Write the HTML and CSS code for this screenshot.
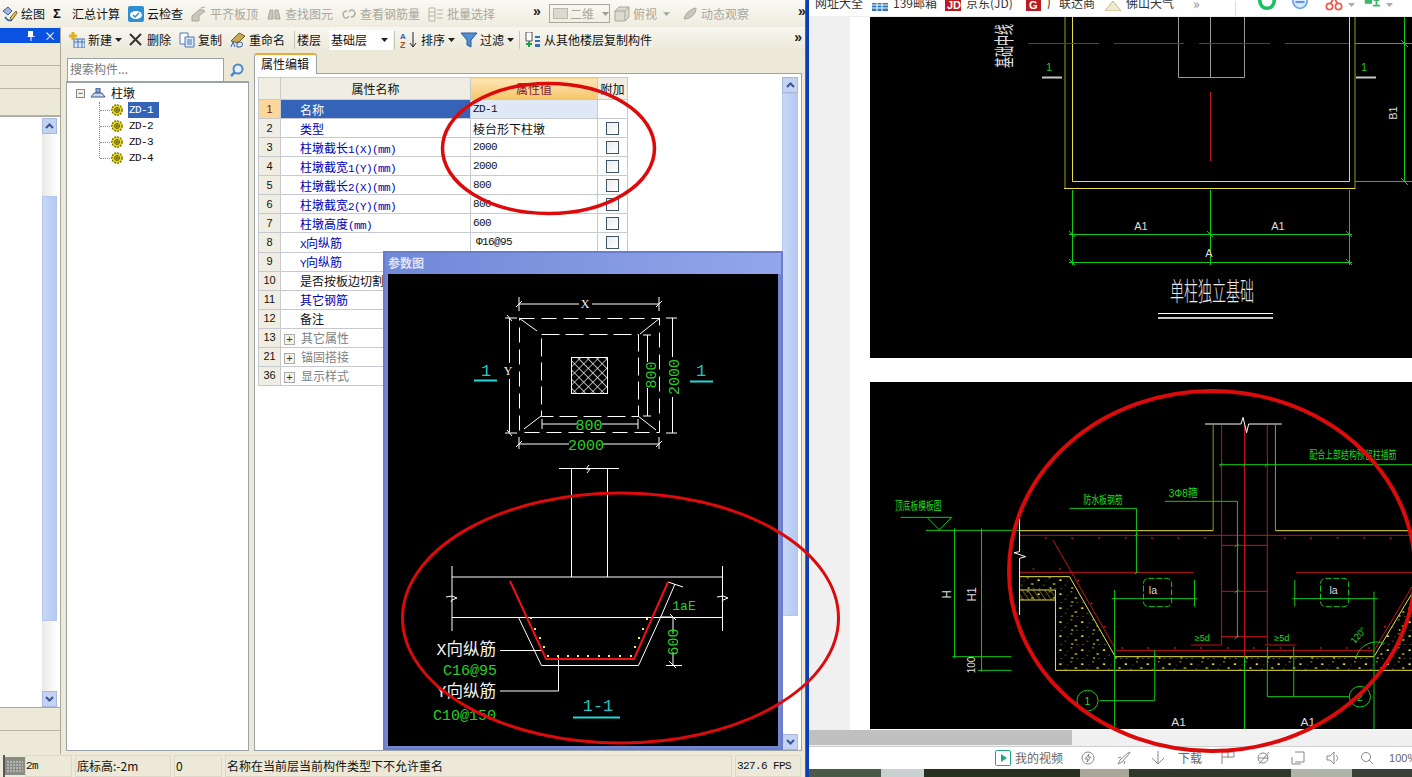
FILE: index.html
```html
<!DOCTYPE html>
<html lang="zh-CN">
<head>
<meta charset="utf-8">
<title>钢筋算量</title>
<link rel="stylesheet" href="styles.css">
</head>
<body>
<svg class="defs" width="0" height="0" aria-hidden="true">
  <defs>
    <symbol id="gear" viewBox="0 0 12 12">
      <circle cx="6" cy="6" r="5.200" fill="#e8dc10" stroke="#6a6000" stroke-width="1.200" stroke-dasharray="2 1"/>
      <circle cx="6" cy="6" r="2.400" fill="#f8f4a0" stroke="#5a5200"/>
      <path d="M6 3.500v5M3.500 6h5" stroke="#5a5200"/>
    </symbol>
    <symbol id="caret" viewBox="0 0 7 4"><path d="M0 0h7L3.500 4z" fill="#222"/></symbol>
    <symbol id="chev-up" viewBox="0 0 9 6"><path d="M1 5l3.500-3.500L8 5" fill="none" stroke="#3a5590" stroke-width="2"/></symbol>
    <symbol id="chev-down" viewBox="0 0 9 6"><path d="M1 1l3.500 3.500L8 1" fill="none" stroke="#3a5590" stroke-width="2"/></symbol>
    <pattern id="hatch" width="6.500" height="6.500" patternUnits="userSpaceOnUse" patternTransform="rotate(45)">
      <path d="M0 0H6.500M0 0V6.500" stroke="#fff" stroke-width="1.200" fill="none"/>
    </pattern>
    <pattern id="concrete" width="62" height="42" patternUnits="userSpaceOnUse">
      <rect x="8" y="10" width="6" height="5" fill="#f0e830"/>
      <rect x="40" y="4" width="4" height="3" fill="#f0e830"/>
      <rect x="52" y="22" width="6" height="4" fill="#f0e830"/>
      <rect x="24" y="26" width="3" height="3" fill="#b0a820"/>
      <rect x="42" y="34" width="5" height="4" fill="#f0e830"/>
      <rect x="12" y="36" width="3" height="2" fill="#c8c8a0"/>
      <rect x="30" y="14" width="2" height="2" fill="#c8c8a0"/>
      <rect x="58" y="36" width="2" height="3" fill="#c8c8a0"/>
    </pattern>
    <pattern id="slant" width="16" height="30" patternUnits="userSpaceOnUse">
      <path d="M-4 0L16 30M12 0L32 30" stroke="#b8a820" stroke-width="2" fill="none"/>
    </pattern>
  </defs>
</svg>

<div class="screen">
  <section class="app">
    <div class="bar-top">
      <span class="tool"><svg class="ico" viewBox="0 0 16 16"><path d="M1 5l5-4 4 4-4 4z" fill="#9fb6dc" stroke="#44609a"/><path d="M8 12l6-7 1 2-5 7z" fill="#e8c060" stroke="#7a6020"/><path d="M3 11c2 3 5 4 7 3" stroke="#3060b0" stroke-width="1.500" fill="none"/></svg>绘图</span>
      <span class="tool"><span class="sigma">Σ</span><span class="sigma-text">汇总计算</span></span>
      <span class="tool"><svg class="ico" viewBox="0 0 16 16"><rect width="16" height="16" rx="2" fill="#2f8fd0"/><ellipse cx="8" cy="9" rx="6" ry="4" fill="#fff"/><path d="M5 9l2 2 4-4" stroke="#2f8fd0" stroke-width="1.500" fill="none"/></svg>云检查</span>
      <span class="tool off"><svg class="ico" viewBox="0 0 16 16"><path d="M1 15V10l8-7 5 2-6 5v5z" fill="#c9c7bb" stroke="#aaa89c"/><path d="M10 2l4-1" stroke="#aaa89c"/></svg>平齐板顶</span>
      <span class="tool off"><svg class="ico" viewBox="0 0 16 16"><path d="M2 13l2-9h3v9zM9 13V4h3l2 9z" fill="#c9c7bb" stroke="#aaa89c"/></svg>查找图元</span>
      <span class="tool off"><svg class="ico" viewBox="0 0 16 16"><path d="M6 5C2 5 1 9 3 11s4 1 5-1M10 11c4 0 5-4 3-6s-4-1-5 1" stroke="#b0aea0" fill="none" stroke-width="1.500"/></svg>查看钢筋量</span>
      <span class="tool off"><svg class="ico" viewBox="0 0 16 16"><path d="M1 2h6v13H1zM1 6h6M1 10h6M9 4h6M9 8h6M9 12h6" fill="none" stroke="#b5b3a6"/></svg>批量选择</span>
      <span class="more more-a">»</span>
      <span class="combo-2d"><i class="swatch"></i>二维<svg class="caret" viewBox="0 0 7 4"><use href="#caret"/></svg></span>
      <span class="tool off view"><svg class="ico" viewBox="0 0 16 16"><path d="M1 5l4-4h10v10l-4 4H1zM1 5h10v10M11 5l4-4" fill="#dcdacd" stroke="#aaa89c"/></svg>俯视<svg class="caret grey" viewBox="0 0 7 4"><use href="#caret"/></svg></span>
      <span class="tool off orbit"><svg class="ico" viewBox="0 0 16 16"><path d="M2 13C3 8 8 3 14 2c0 6-5 11-12 11z" fill="#c9c7bb" stroke="#aaa89c"/></svg>动态观察</span>
      <span class="more more-b">»</span>
    </div>

    <div class="main">
      <aside class="dock">
        <div class="dock-title">
          <svg class="pin" viewBox="0 0 9 10"><path d="M2 0h5v5h1.500v1h-3v4h-1V6h-3V5H2z" fill="#fff"/></svg>
          <span class="close">×</span>
        </div>
        <div class="dock-row"></div>
        <div class="dock-row"></div>
        <div class="dock-row dock-row-tall"></div>
        <div class="dock-list">
          <div class="dock-blank"></div>
          <div class="scroll scroll-dock">
            <span class="sbtn"><svg class="chev"><use href="#chev-up"/></svg></span>
            <span class="strack"><i class="sthumb"></i></span>
            <span class="sbtn"><svg class="chev"><use href="#chev-down"/></svg></span>
          </div>
        </div>
        <div class="dock-row"></div>
        <div class="dock-row"></div>
      </aside>

      <div class="work">
        <div class="bar-second">
          <span class="tool"><svg class="ico" viewBox="0 0 16 16"><rect x="5" y="7" width="11" height="9" fill="#dbe7f7" stroke="#4a76b8"/><path d="M5 10h11M9 7v9M13 7v9" stroke="#4a76b8"/><path d="M4 0v8M0 4h8" stroke="#e0b020" stroke-width="3"/></svg>新建<svg class="caret" viewBox="0 0 7 4"><use href="#caret"/></svg></span>
          <span class="tool tool-del"><svg class="ico ico-x" viewBox="0 0 13 13"><path d="M1 1l11 11M12 1L1 12" stroke="#333" stroke-width="2"/></svg>删除</span>
          <span class="tool"><svg class="ico" viewBox="0 0 16 16"><path d="M1 1h8v11H1z" fill="#fff" stroke="#4a76b8"/><path d="M6 5h9v10H6z" fill="#dbe7f7" stroke="#4a76b8"/><path d="M8 8h5M8 10h5M8 12h5" stroke="#4a76b8"/></svg>复制</span>
          <span class="tool"><svg class="ico" viewBox="0 0 16 16"><path d="M1 9L9 1l6 3-7 7z" fill="#c8a850" stroke="#77602a"/><path d="M1 15l2-5 2 5M7 15v-5h3a1 1 0 0 1 0 5z" stroke="#3060b0" fill="none"/></svg>重命名</span>
          <i class="sep sep-floor"></i>
          <span class="label">楼层</span>
          <span class="combo-floor">基础层<svg class="caret" viewBox="0 0 7 4"><use href="#caret"/></svg></span>
          <i class="sep"></i>
          <span class="tool tool-sort"><svg class="ico ico-az" viewBox="0 0 17 18"><text class="az-a" x="0" y="8">A</text><text class="az-z" x="0" y="17">Z</text><path d="M13 1v15M10 12l3 4 3-4" stroke="#222" fill="none"/></svg>排序<svg class="caret" viewBox="0 0 7 4"><use href="#caret"/></svg></span>
          <span class="tool tool-filter"><svg class="ico" viewBox="0 0 16 16"><path d="M0 1h16l-6 7v7l-4-2V8z" fill="#4f90d8" stroke="#2a5c9c"/></svg>过滤<svg class="caret" viewBox="0 0 7 4"><use href="#caret"/></svg></span>
          <i class="sep sep-copy"></i>
          <span class="tool tool-copy"><svg class="ico" viewBox="0 0 16 16"><path d="M1 0h6v9H1z" fill="#fff" stroke="#555"/><path d="M1 12h6M4 9v6" stroke="#20a040" stroke-width="2"/><path d="M10 4h5v2h-5zM10 8h5v2h-5zM10 12h5v3h-5z" fill="#3070b8"/></svg>从其他楼层复制构件</span>
          <span class="more more-c">»</span>
        </div>

        <div class="panes">
          <div class="tree-pane">
            <div class="search"><span class="search-box">搜索构件...</span>
              <svg class="search-ico" viewBox="0 0 14 14"><circle cx="8" cy="6" r="4.500" fill="#e6f0fa" stroke="#4a8cc8" stroke-width="2"/><path d="M5 9l-4 4" stroke="#4a8cc8" stroke-width="2.500"/></svg>
            </div>
            <div class="tree">
              <div class="tree-root"><span class="tbox">−</span>
                <svg class="tree-ico" viewBox="0 0 16 10"><path d="M6 0h4v5H6z" fill="#8aa4d0" stroke="#3a5a90"/><path d="M1 9l3-4h8l3 4z" fill="#c8d4e8" stroke="#3a5a90"/></svg>柱墩</div>
              <ul class="tree-list">
                <li class="tree-item"><svg class="gear"><use href="#gear"/></svg><span class="sel">ZD-1</span></li>
                <li class="tree-item"><svg class="gear"><use href="#gear"/></svg><span>ZD-2</span></li>
                <li class="tree-item"><svg class="gear"><use href="#gear"/></svg><span>ZD-3</span></li>
                <li class="tree-item"><svg class="gear"><use href="#gear"/></svg><span>ZD-4</span></li>
              </ul>
            </div>
          </div>

          <div class="prop-pane">
            <div class="tabs"><span class="tab">属性编辑</span></div>
            <div class="prop-body">
              <table class="grid">
                <colgroup><col class="c-n"><col class="c-name"><col class="c-val"><col class="c-add"></colgroup>
                <thead><tr><th class="num"></th><th>属性名称</th><th class="th-val">属性值</th><th>附加</th></tr></thead>
                <tbody>
                  <tr class="current"><td class="num">1</td><td class="name">名称</td><td class="val">ZD-1</td><td></td></tr>
                  <tr><td class="num">2</td><td class="name link">类型</td><td class="val val-cn">棱台形下柱墩</td><td><i class="check"></i></td></tr>
                  <tr><td class="num">3</td><td class="name link">柱墩截长<span class="lat">1(X)(mm)</span></td><td class="val">2000</td><td><i class="check"></i></td></tr>
                  <tr><td class="num">4</td><td class="name link">柱墩截宽<span class="lat">1(Y)(mm)</span></td><td class="val">2000</td><td><i class="check"></i></td></tr>
                  <tr><td class="num">5</td><td class="name link">柱墩截长<span class="lat">2(X)(mm)</span></td><td class="val">800</td><td><i class="check"></i></td></tr>
                  <tr><td class="num">6</td><td class="name link">柱墩截宽<span class="lat">2(Y)(mm)</span></td><td class="val">800</td><td><i class="check"></i></td></tr>
                  <tr><td class="num">7</td><td class="name link">柱墩高度<span class="lat">(mm)</span></td><td class="val">600</td><td><i class="check"></i></td></tr>
                  <tr><td class="num">8</td><td class="name link"><span class="lat">X</span>向纵筋</td><td class="val val-steel">Φ16@95</td><td><i class="check"></i></td></tr>
                  <tr><td class="num">9</td><td class="name link"><span class="lat">Y</span>向纵筋</td><td class="val"></td><td></td></tr>
                  <tr><td class="num">10</td><td class="name">是否按板边切割</td><td class="val"></td><td></td></tr>
                  <tr><td class="num">11</td><td class="name link">其它钢筋</td><td class="val"></td><td></td></tr>
                  <tr><td class="num">12</td><td class="name">备注</td><td class="val"></td><td></td></tr>
                  <tr class="group"><td class="num">13</td><td class="name" colspan="3"><span class="plus">+</span>其它属性</td></tr>
                  <tr class="group"><td class="num">21</td><td class="name" colspan="3"><span class="plus">+</span>锚固搭接</td></tr>
                  <tr class="group"><td class="num">36</td><td class="name" colspan="3"><span class="plus">+</span>显示样式</td></tr>
                </tbody>
              </table>
              <div class="scroll scroll-prop">
                <span class="sbtn"><svg class="chev"><use href="#chev-up"/></svg></span>
                <span class="strack"><i class="sthumb"></i></span>
                <span class="sbtn"><svg class="chev"><use href="#chev-down"/></svg></span>
              </div>
            </div>
          </div>
        </div>
      </div>
    </div>

    <div class="status">
      <span class="st-key"><svg viewBox="0 0 20 18" width="20" height="18"><rect width="20" height="18" fill="#8b8b85"/><path d="M2 5h16M2 8h16M2 11h16M2 14h16" stroke="#ddd" stroke-dasharray="2 1"/></svg></span>
      <span class="st st-a">2m</span>
      <span class="st st-b">底标高:-2m</span>
      <span class="st st-c">0</span>
      <span class="st st-d">名称在当前层当前构件类型下不允许重名</span>
      <span class="st st-e">327.6 FPS</span>
    </div>

    <div class="dialog">
      <div class="dialog-title">参数图</div>
      <svg class="cad" viewBox="388 274 390 472" width="390" height="472">
        <g class="w">
          <path d="M519 304H579M592 304H659M519 297V311M659 297V311M516 307l6-6M656 307l6-6"/>
          <rect class="dash-l" x="519.500" y="318.500" width="140" height="114"/>
          <rect class="dash-m" x="541.500" y="334.500" width="97" height="82"/>
          <path d="M519 318l18 13M660 318l-20 16M524 429l17-13M638 416l18 14"/>
          <rect class="hatch" x="571.500" y="357.500" width="36" height="36"/>
          <path d="M509.500 318V363M509.500 379V432M505 318h12M505 433h12M507 315l5 6M507 430l5 6"/>
          <path d="M647.500 335V362M647.500 388V416M643 335h8M643 416h8M672.500 318V357M672.500 397V433M666 318h11M666 433h11"/>
          <path d="M542 424H577M602 424H638M542 419v10M638 419v10M519 444H569M603 444H659M519 437v12M659 437v12M516 447l6-6M656 447l6-6"/>
          <path d="M559 468.500H619M571.500 468V577M607.500 468V577M589 465l-3 4 4 0-3 4"/>
          <path d="M452 566V631M722.500 566V631M452 577H722.500M452 617.500H722.500M446 597l6-1 5 2-5 2-1 2M717 597l6-1 5 2-5 2-1 2"/>
          <path d="M518.500 617.500L541.500 665.500H638.500L660.500 617.500L675 584"/>
          <path d="M668 582l15 5M660 617h12M673 617V632M673 652V665M666 665.500h16M669 661l7 7M670 614l6 6"/>
          <path d="M500 650.500H543M500 691H558.500V655"/>
        </g>
        <path class="r2" d="M510 581L546 659H634L668 582"/>
        <g class="ydots">
          <rect x="530" y="617" width="2" height="2"/><rect x="534" y="628" width="2" height="2"/><rect x="539" y="637" width="2" height="2"/><rect x="543" y="646" width="2" height="2"/><rect x="547" y="655" width="2" height="2"/><rect x="557" y="655" width="2" height="2"/><rect x="567" y="655" width="2" height="2"/><rect x="577" y="655" width="2" height="2"/><rect x="587" y="655" width="2" height="2"/><rect x="598" y="655" width="2" height="2"/><rect x="608" y="655" width="2" height="2"/><rect x="619" y="655" width="2" height="2"/><rect x="630" y="655" width="2" height="2"/><rect x="634" y="646" width="2" height="2"/><rect x="638" y="637" width="2" height="2"/><rect x="642" y="628" width="2" height="2"/><rect x="646" y="618" width="2" height="2"/>
        </g>
        <g class="cyan-line"><path d="M474 380.500H497M690 381.500H713M573 717.500H620"/></g>
        <text class="t t-w t-dim" x="585" y="308" text-anchor="middle">X</text>
        <text class="t t-w t-dim" x="508" y="375" text-anchor="middle">Y</text>
        <text class="t t-c t-lg" x="486" y="376" text-anchor="middle">1</text>
        <text class="t t-c t-lg" x="701" y="376" text-anchor="middle">1</text>
        <text class="t t-g" x="589" y="430" text-anchor="middle">800</text>
        <text class="t t-g" x="586" y="450" text-anchor="middle">2000</text>
        <text class="t t-g" transform="rotate(-90 656 375)" x="656" y="375" text-anchor="middle">800</text>
        <text class="t t-g" transform="rotate(-90 679 377)" x="679" y="377" text-anchor="middle">2000</text>
        <text class="t t-g t-sm" x="684" y="610" text-anchor="middle">1aE</text>
        <text class="t t-g t-six" transform="rotate(-90 678 642)" x="678" y="642" text-anchor="middle">600</text>
        <text class="t t-w t-cn" x="496" y="655" text-anchor="end">X向纵筋</text>
        <text class="t t-g" x="497" y="675" text-anchor="end">C16@95</text>
        <text class="t t-w t-cn" x="496" y="697" text-anchor="end">Y向纵筋</text>
        <text class="t t-g" x="496" y="720" text-anchor="end">C10@150</text>
        <text class="t t-c t-lg" x="598" y="711" text-anchor="middle">1-1</text>
      </svg>
    </div>
  </section>

  <i class="app-edge"></i>

  <section class="browser">
    <div class="bookmarks">
      <span class="bm bm-a">网址大全</span>
      <span class="bm bm-b"><svg class="bm-ico" viewBox="0 0 16 16"><rect y="8" width="16" height="8" fill="#2a78c0"/><path d="M0 10h16M0 13h16M5 8v8M10 8v8" stroke="#fff"/></svg>139邮箱</span>
      <span class="bm bm-c"><svg class="bm-ico" viewBox="0 0 16 16"><rect width="16" height="16" fill="#b81c22"/><text class="bm-jd" x="2" y="14">JD</text></svg>京东(JD)</span>
      <span class="bm bm-d"><svg class="bm-ico" viewBox="0 0 16 16"><rect width="15" height="16" fill="#b81c22"/><text class="bm-jd" x="3" y="14">G</text></svg>广联达商</span>
      <span class="bm bm-e"><svg class="bm-ico" viewBox="0 0 16 16"><path d="M0 16L8 6l8 10z" fill="#f0ead0" stroke="#c8b880"/></svg>佛山天气</span>
      <span class="bm bm-more">»</span>
      <i class="bm-sep"></i>
      <svg class="bm-tool t1" viewBox="0 0 20 20"><circle cx="10" cy="9" r="8" fill="#fff" stroke="#18c060" stroke-width="4"/></svg>
      <svg class="bm-tool t2" viewBox="0 0 20 20"><circle cx="10" cy="9" r="8" fill="#d8e8fa" stroke="#70a8e8" stroke-width="2"/><path d="M5 10h10" stroke="#5090d8" stroke-width="2"/></svg>
      <svg class="bm-tool t3" viewBox="0 0 20 20"><circle cx="5" cy="15" r="3.500" fill="none" stroke="#e86050" stroke-width="2"/><circle cx="15" cy="15" r="3.500" fill="none" stroke="#e86050" stroke-width="2"/><path d="M6 12l7-12M14 12L7 0" stroke="#e86050" stroke-width="2"/></svg>
      <svg class="bm-caret" viewBox="0 0 7 4"><path d="M0 0h7L3.500 4z" fill="#aaa"/></svg>
      <svg class="bm-tool t4" viewBox="0 0 20 20"><path d="M2 2h8v10H2z" fill="#38b868"/><path d="M12 8h6M15 5v9M11 14h8" stroke="#38b868" stroke-width="2"/></svg>
      <svg class="bm-caret" viewBox="0 0 7 4"><path d="M0 0h7L3.500 4z" fill="#aaa"/></svg>
    </div>

    <div class="page">
      <div class="gutter"></div>
      <div class="gutter-white"></div>
      <div class="sheets">
        <svg class="sheet sheet-top" viewBox="870 17 542 341" width="542" height="341">
          <g class="olive"><path d="M1065 17V188M1355 17V188"/></g>
          <g class="yel"><path d="M1064 188.500H1355.500M1072.500 17V181.500H1349.500V17"/></g>
          <g class="grey"><path d="M1178.500 17V77.500H1244.500V17M1210.500 17V77"/></g>
          <path class="red" d="M1028 43.500H1099M1114 43.500H1184M1199 43.500H1270M1285 43.500H1349M1210.500 92V161"/>
          <g class="grn">
            <path d="M1355 43.500H1412M1404.500 17V181M1355 181.500H1412M1401 178l7 7M1401 40l7 7"/>
            <path d="M1072.500 190V265M1210.500 190V265M1349.500 190V265M1069 234.500H1352M1069 262.500H1352M1069 231l6 6M1207 231l6 6M1346 231l6 6M1069 259l6 6M1346 259l6 6"/>
          </g>
          <path class="lgrey" d="M1042 77.500H1062M1356 77.500H1376"/>
          <text class="s s-g" x="1049" y="71" text-anchor="middle">1</text>
          <text class="s s-g" x="1364" y="71" text-anchor="middle">1</text>
          <text class="s s-w s-col" transform="translate(1012 46) rotate(-90) scale(.55 1)" x="0" y="0" text-anchor="middle">基础中线</text>
          <text class="s s-w" transform="rotate(-90 1397 113)" x="1397" y="113" text-anchor="middle">B1</text>
          <text class="s s-w" x="1141" y="230" text-anchor="middle">A1</text>
          <text class="s s-w" x="1278" y="230" text-anchor="middle">A1</text>
          <text class="s s-w" x="1209" y="257" text-anchor="middle">A</text>
          <text class="s s-w s-title" transform="translate(1212 301) scale(.54 1)" x="0" y="0" text-anchor="middle">单柱独立基础</text>
          <path class="w" d="M1158 313.500H1273"/>
          <path class="lgrey" d="M1158 318H1273"/>
        </svg>

        <svg class="sheet sheet-bottom" viewBox="28 6 1540 1041" preserveAspectRatio="none" width="542" height="347">
          <path d="M453 590H595L725 830H1460L1568 640V871H555V660H453Z" fill="url(#concrete)"/>
          <rect x="453" y="630" width="102" height="30" fill="url(#slant)"/>
          <g class="yel ns">
            <path d="M453 452H1003M1180 452H1568M453 590H595L725 830H1460L1568 640M555 871H1568M555 630V871M453 630H555M453 660H555"/>
          </g>
          <g class="olive ns"><path d="M1003 135V452M1180 135V452"/></g>
          <g class="red ns">
            <path d="M1027 135V795M1157 135V795M1092 135V830M453 466H1568M1027 496H1157M1027 634H1157M1027 770H1157M453 577H948M1238 577H1568M728 812H1460M548 480L728 812M1460 812L1568 620M940 795H1027M1150 795H1240"/>
          </g>
          <g class="reddots">
            <rect x="525" y="472" width="5" height="4"/><rect x="600" y="472" width="5" height="4"/><rect x="677" y="472" width="5" height="4"/><rect x="752" y="472" width="5" height="4"/><rect x="827" y="472" width="5" height="4"/><rect x="902" y="472" width="5" height="4"/><rect x="978" y="472" width="5" height="4"/><rect x="1204" y="472" width="5" height="4"/><rect x="1278" y="472" width="5" height="4"/><rect x="1354" y="472" width="5" height="4"/><rect x="1430" y="472" width="5" height="4"/><rect x="1505" y="472" width="5" height="4"/>
            <rect x="490" y="565" width="5" height="4"/><rect x="565" y="565" width="5" height="4"/><rect x="617" y="600" width="5" height="4"/><rect x="655" y="668" width="5" height="4"/><rect x="692" y="738" width="5" height="4"/>
            <rect x="742" y="802" width="5" height="4"/><rect x="816" y="802" width="5" height="4"/><rect x="892" y="802" width="5" height="4"/><rect x="966" y="802" width="5" height="4"/><rect x="1042" y="802" width="5" height="4"/><rect x="1116" y="802" width="5" height="4"/><rect x="1192" y="802" width="5" height="4"/><rect x="1306" y="802" width="5" height="4"/><rect x="1380" y="802" width="5" height="4"/><rect x="1444" y="802" width="5" height="4"/><rect x="1488" y="738" width="5" height="4"/>
          </g>
          <g class="grn ns">
            <path d="M1020 254H1568M1022 260l8-10M1088 260l8-10M1150 260l8-10"/>
            <path d="M595 385H785V578M866 364H1072V770M780 468l10-6M780 582l10-6M1064 500l12-8M1064 638l12-8M1064 776l12-8"/>
            <path d="M115 412H260L225 450L190 412M187 451H453M268 445V835M345 445V875M262 830H430M335 871H430"/>
            <path d="M715 656H958M723 630V1047M950 600V680M1228 656H1470M1235 600V680M1460 635V1047M1092 830V1047"/>
            <path d="M837 810V962H680M1157 800V950H1390M1232 800V950"/>
            <path d="M1410 830A60 60 0 0 1 1490 790"/>
            <rect x="805" y="595" width="80" height="85" rx="14" class="cloud"/>
            <rect x="1308" y="595" width="80" height="85" rx="14" class="cloud"/>
            <ellipse cx="646" cy="962" rx="30" ry="31"/>
            <ellipse cx="1420" cy="950" rx="30" ry="31"/>
          </g>
          <g class="w ns">
            <path d="M980 132H1082L1088 112L1098 158L1104 132H1198M453 415V515L437 518L470 530L453 535V705"/>
          </g>
          <text class="m m-g" x="165" y="390" text-anchor="middle" textLength="132" lengthAdjust="spacingAndGlyphs">顶底板模板图</text>
          <text class="m m-g" x="690" y="372" text-anchor="middle" textLength="112" lengthAdjust="spacingAndGlyphs">防水板钢筋</text>
          <text class="m m-g" x="918" y="351" text-anchor="middle" textLength="82" lengthAdjust="spacingAndGlyphs">3Φ8箍</text>
          <text class="m m-g" x="1400" y="238" text-anchor="middle" textLength="248" lengthAdjust="spacingAndGlyphs">配合上部结构预留柱插筋</text>
          <text class="m m-w m-s" x="832" y="643" text-anchor="middle">la</text>
          <text class="m m-w m-s" x="1345" y="643" text-anchor="middle">la</text>
          <text class="m m-g m-xs" x="972" y="782" text-anchor="middle">≥5d</text>
          <text class="m m-g m-xs" x="1198" y="782" text-anchor="middle">≥5d</text>
          <text class="m m-g m-xs" transform="rotate(-50 1415 765)" x="1415" y="775" text-anchor="middle">120°</text>
          <text class="m m-w" transform="rotate(-90 257 643)" x="257" y="643" text-anchor="middle">H</text>
          <text class="m m-w" transform="rotate(-90 329 643)" x="329" y="643" text-anchor="middle">H1</text>
          <text class="m m-w m-s" transform="rotate(-90 326 855)" x="326" y="855" text-anchor="middle">100</text>
          <text class="m m-w" x="905" y="1038" text-anchor="middle">A1</text>
          <text class="m m-w" x="1272" y="1038" text-anchor="middle">A1</text>
          <text class="m m-g m-s" x="646" y="974" text-anchor="middle">1</text>
          <text class="m m-g m-s" x="1420" y="962" text-anchor="middle">2</text>
        </svg>
      </div>
    </div>

    <div class="h-scroll"><i class="h-thumb"></i></div>

    <div class="bstatus">
      <span class="bs bs-video"><svg class="play" viewBox="0 0 16 16"><rect x=".5" y=".5" width="15" height="15" rx="1" fill="none" stroke="#20a880"/><path d="M6 4l6 4-6 4z" fill="#20a880"/></svg>我的视频</span>
      <svg class="bs-ico i1" viewBox="0 0 14 14"><circle cx="7" cy="7" r="6"/><path d="M8 3L4 8h3l-1 3 4-5H7z"/></svg>
      <svg class="bs-ico i2" viewBox="0 0 14 14"><path d="M1 13l4-2 7-8 1-2-2 1-8 7zM4 6L1 7M8 10l-1 3"/></svg>
      <svg class="bs-ico i3" viewBox="0 0 14 14"><path d="M7 0v13M1 7l6 6 6-6"/></svg>
      <span class="bs bs-dl">下载</span>
      <svg class="bs-ico i4" viewBox="0 0 14 14"><path d="M1 13V1h12v5H1M7 1v6"/></svg>
      <svg class="bs-ico i5" viewBox="0 0 14 14"><circle cx="7" cy="7" r="5"/><path d="M2 7h10M3 13L13 1"/></svg>
      <svg class="bs-ico i6" viewBox="0 0 14 14"><path d="M4 1h9v10H4M1 6v7h9"/></svg>
      <svg class="bs-ico i7" viewBox="0 0 14 14"><path d="M1 5h3l4-4v12l-4-4H1zM10 4c2 2 2 4 0 6"/></svg>
      <svg class="bs-ico i8" viewBox="0 0 14 14"><circle cx="6" cy="6" r="4.500"/><path d="M9 9l4 4"/></svg>
      <span class="bs bs-zoom">100%</span>
    </div>

    <div class="wallpaper"></div>
  </section>

  <svg class="marks" viewBox="0 0 1412 777" width="1412" height="777" aria-hidden="true">
    <ellipse class="top" cx="548.500" cy="148.500" rx="106" ry="65"/>
    <ellipse cx="620.500" cy="618" rx="218" ry="125"/>
    <ellipse class="big" cx="1212" cy="571" rx="203" ry="180"/>
  </svg>
</div>
</body>
</html>
```
FILE: styles.css
```css
* { box-sizing: border-box; }
html, body { margin: 0; padding: 0; }
body {
  width: 1412px; height: 777px; overflow: hidden; background: #ece9d8;
  font: 12px/16px "Noto Sans CJK SC", "Liberation Sans", sans-serif; color: #111;
}
.defs { position: absolute; }
.screen { position: relative; display: flex; width: 1412px; height: 777px; overflow: hidden; }
i { display: block; font-style: normal; }

/* application */
.app { position: relative; width: 805px; height: 777px; display: flex; flex-direction: column; background: #ece9d8; }
.app-edge { width: 4px; background: #0c3fb4; border-left: 1px solid #3a66cc; }

.bar-top { height: 27px; display: flex; align-items: center; gap: 8px; padding-left: 2px; background: linear-gradient(#faf9f3, #efecdf); white-space: nowrap; }
.bar-second { height: 25px; display: flex; align-items: center; gap: 8px; padding-left: 8px; background: linear-gradient(#f8f7f0, #ebe8d9); white-space: nowrap; }
.tool { display: inline-flex; align-items: center; gap: 3px; height: 20px; }
.tool.off { color: #a9a79b; }
.ico { width: 16px; height: 16px; flex: none; }
.ico-x { width: 13px; height: 13px; margin-right: 2px; }
.ico-az { width: 17px; height: 18px; margin-right: 1px; }
.tool-del { margin-left: -1px; }
.tool-sort { margin-left: -3px; }
.tool-filter { margin-left: -2px; }
.tool-copy { margin-left: -3px; }
.sep-copy { margin-left: -3px; }
.az-a { font: bold 8px "Liberation Sans", sans-serif; fill: #3060b0; }
.az-z { font: bold 9px "Liberation Sans", sans-serif; fill: #b05030; }
.caret { width: 7px; height: 4px; flex: none; }
.caret.grey { opacity: .4; margin-left: 3px; }
.sigma { font: bold 13px "Liberation Sans", sans-serif; width: 10px; }
.sigma-text { margin-left: 6px; }
.more { font: bold 14px/12px "Liberation Sans", sans-serif; color: #222; }
.more-a { margin-left: 30px; margin-top: -6px; }
.more-b { margin-left: 41px; margin-top: -6px; }
.more-c { margin-left: auto; margin-right: 3px; margin-top: -6px; }
.combo-2d { display: inline-flex; align-items: center; width: 62px; height: 19px; border: 1px solid #a9a79b; color: #a9a79b; padding-left: 3px; gap: 2px; }
.swatch { width: 15px; height: 11px; background: #dcdacd; border: 1px solid #bbb9ab; }
.combo-2d .caret { opacity: .4; margin-left: 6px; }
.view { margin-left: -4px; }
.orbit { margin-left: 4px; }
.sep { width: 1px; height: 18px; background: #c8c5b4; flex: none; }
.sep-floor { margin-left: 1px; margin-right: -6px; }
.combo-floor { width: 64px; height: 20px; margin-right: -7px; background: #fff; padding-left: 2px; display: flex; align-items: center; justify-content: space-between; padding-right: 5px; }

.main { flex: 1; min-height: 0; display: flex; }
.dock { width: 61px; display: flex; flex-direction: column; padding-top: 1px; border-right: 1px solid #a8a89c; }
.dock-title { height: 15px; background: #0a52e0; color: #fff; display: flex; align-items: center; justify-content: flex-end; gap: 9px; padding-right: 4px; flex: none; font-size: 12px; line-height: 14px; }
.pin { width: 9px; height: 10px; }
.dock-row { height: 23px; flex: none; border-bottom: 1px solid #b8b5a5; }
.dock-row-tall { height: 27px; background: #ece9d8; }
.dock-list { flex: 1; min-height: 0; display: flex; background: #fff; border-top: 1px solid #a8a89c; border-bottom: 1px solid #a8a89c; padding-top: 1px; }
.dock-blank { width: 42px; }
.dock-row:last-child { border-bottom: 0; }

.scroll { display: flex; flex-direction: column; }
.scroll-dock { width: 15px; background: linear-gradient(90deg, #e8e8e4, #fff); }
.sbtn { flex: none; height: 16px; display: flex; align-items: center; justify-content: center; background: #c4d3f2; border: 1px solid #a8b8dc; }
.chev { width: 9px; height: 6px; }
.strack { flex: 1; min-height: 0; display: flex; flex-direction: column; }
.sthumb { background: linear-gradient(90deg, #c8d8f8, #b4c8f2); border: 1px solid #b4c6ea; }
.scroll-dock .strack { padding-top: 62px; padding-bottom: 70px; }
.scroll-dock .sthumb { flex: 1; }

.work { flex: 1; min-width: 0; display: flex; flex-direction: column; }
.panes { flex: 1; min-height: 0; display: flex; padding: 3px 3px 3px 5px; gap: 5px; }

.tree-pane { width: 183px; display: flex; flex-direction: column; background: #fff; border: 1px solid #9aa3a8; border-top: 0; }
.search { height: 28px; flex: none; display: flex; align-items: center; background: #ece9d8; padding-top: 3px; margin: 0 -1px; border-bottom: 2px solid #9aa3a8; }
.search-box { width: 157px; height: 24px; margin-left: 1px; background: #fff; border: 1px solid #9aa3a8; color: #777; padding-left: 2px; line-height: 19px; }
.search-ico { width: 14px; height: 14px; margin-left: 6px; }
.tree { flex: 1; padding: 2px 0 0 9px; }
.tree-root { height: 16px; display: flex; align-items: center; }
.tbox { width: 9px; height: 9px; border: 1px solid #888; color: #333; font: 9px/7px "Liberation Sans", sans-serif; text-align: center; background: #f4f3ea; }
.tree-ico { width: 16px; height: 10px; margin-left: 5px; margin-right: 5px; }
.tree-list { list-style: none; margin: 1px 0 0 23px; padding: 0; border-left: 1px dotted #888; height: 56px; }
.tree-item { height: 16px; display: flex; align-items: center; font: 11px/16px "Liberation Mono", monospace; letter-spacing: -.6px; white-space: nowrap; }
.tree-item::before { content: ""; width: 10px; border-top: 1px dotted #888; }
.gear { width: 12px; height: 12px; margin-left: 1px; margin-right: 5px; }
.tree-item span { padding: 0 6px 0 1px; }
.tree-item .sel { background: #3563b8; color: #fff; }

.prop-pane { width: 548px; display: flex; flex-direction: column; }
.tabs { height: 20px; flex: none; display: flex; margin-top: -2px; }
.tab { width: 63px; height: 21px; background: #fff; border: 1px solid #9aa3a8; border-top: 2px solid #f0a830; border-bottom: 0; border-radius: 3px 3px 0 0; padding-left: 6px; line-height: 18px; position: relative; z-index: 1; }
.prop-body { flex: 1; min-height: 0; display: flex; justify-content: space-between; background: #fff; border: 1px solid #9aa3a8; padding: 3px 3px 0 3px; }
.grid { border-collapse: collapse; table-layout: fixed; width: 369px; height: 309px; }
.c-n { width: 22px; } .c-name { width: 190px; } .c-val { width: 127px; } .c-add { width: 30px; }
.grid th, .grid td { height: 19px; padding: 0; border: 1px solid #c6cad0; font-weight: 400; white-space: nowrap; overflow: hidden; line-height: 17px; }
.grid thead th { height: 22px; background: #f0eee2; text-align: center; }
.grid th.th-val { background: linear-gradient(#fde7b8, #f6c567); color: #7a2030; }
.grid .num { background: #f0eee2; text-align: center; font-family: "Liberation Sans", sans-serif; font-size: 11px; }
.grid .name { padding-left: 19px; }
.grid .link { color: #0000b4; }
.lat { font: 11px "Liberation Mono", monospace; letter-spacing: -.6px; }
.grid .val { padding-left: 2px; font-family: "Liberation Mono", "Noto Sans CJK SC", monospace; font-size: 11px; letter-spacing: -.6px; line-height: 18px; }
.grid .val-cn { font-size: 12px; font-family: "Noto Sans CJK SC", sans-serif; letter-spacing: 0; line-height: 17px; }
.grid .val-steel { padding-left: 5px; }
.current .num { background: #fbd79a; color: #802020; }
.current .name { background: #3563b8; color: #fff; }
.current .val { background: #dfe8f5; }
.check { width: 13px; height: 13px; margin: 0 auto; border: 1px solid #3f5568; background: linear-gradient(135deg, #ececea, #fff); }
.group .name { padding-left: 3px; color: #808080; }
.grid .group .name { padding-left: 3px; }
.plus { display: inline-block; width: 11px; height: 11px; margin-right: 6px; border: 1px solid #aaa; color: #333; font: 11px/9px "Liberation Sans", sans-serif; text-align: center; vertical-align: 0; background: #f4f3ea; }
.scroll-prop { width: 16px; background: #fff; }
.scroll-prop .strack { padding-bottom: 118px; }
.scroll-prop .sthumb { flex: 1; }

.status { height: 23px; flex: none; display: flex; gap: 3px; align-items: stretch; padding-left: 3px; padding-top: 1px; font-size: 12px; background: #ece9d8; }
.st-key { width: 22px; display: flex; align-items: center; justify-content: center; border-left: 2px solid #555; }
.st { border: 1px solid #dcd9c8; padding-left: 1px; line-height: 20px; white-space: nowrap; overflow: hidden; }
.st-a { width: 47px; margin-left: -3px; padding-left: 0; font-family: "Liberation Mono", monospace; font-size: 11px; letter-spacing: -.6px; }
.st-b { width: 96px; }
.st-c { width: 48px; }
.st-d { width: 507px; }
.st-e { width: 66px; font-family: "Liberation Mono", monospace; font-size: 11px; letter-spacing: -.6px; }

/* floating dialog */
.dialog { position: absolute; left: 383px; top: 251px; width: 400px; height: 499px; display: flex; flex-direction: column; background: #7486d0; border: 2px solid #6a7ccc; padding: 0 3px 2px 3px; }
.dialog-title { height: 21px; flex: none; margin: 0 -3px; padding-left: 3px; color: #dfe4f6; font-weight: 700; line-height: 20px; font-size: 12px; background: linear-gradient(90deg, #6f88d8, #93a6ea); }
.cad { display: block; background: #000; flex: none; }
.cad g.w, .cad .w, .w { fill: none; stroke: #fff; stroke-width: 1; }
.dash-l { stroke-dasharray: 15 7; }
.dash-m { stroke-dasharray: 18 6; }
.cad g.w .hatch { fill: url(#hatch); stroke-width: 1; }
.r2 { fill: none; stroke: #f01018; stroke-width: 2; }
.ydots rect { fill: #f0f060; }
.cyan-line { stroke: #22d8d8; stroke-width: 2; fill: none; }
.t { font: 15px "Liberation Mono", "Noto Sans CJK SC", monospace; }
.t-w { fill: #f4f4f4; }
.t-g { fill: #28d028; }
.t-c { fill: #20c8c8; }
.t-lg { font-size: 17px; }
.t-sm { font-size: 13px; }
.t-dim { font: 12px "Liberation Serif", serif; }
.t-cn { font-size: 16.500px; }

/* browser */
.browser { flex: 1; min-width: 0; display: flex; flex-direction: column; background: #fff; }
.bookmarks { height: 17px; flex: none; display: flex; align-items: flex-end; overflow: hidden; background: #fff; padding-left: 6px; font-size: 12px; color: #333; border-bottom: 1px solid #eee; }
.bm { display: inline-flex; align-items: center; height: 26px; gap: 5px; white-space: nowrap; }
.bm-a { width: 57px; }
.bm-b { width: 73px; }
.bm-c { width: 81px; }
.bm-d { width: 79px; }
.bm-e { width: 88px; }
.bm-more { color: #888; font-size: 14px; width: 42px; }
.bm-ico { width: 16px; height: 16px; flex: none; }
.bm-jd { font: bold 11px "Liberation Sans", sans-serif; fill: #fff; }
.bm-sep { width: 1px; height: 15px; background: #ddd; margin-right: 22px; }
.bm-tool { width: 18px; height: 18px; flex: none; margin-bottom: 5px; }
.t2 { margin-left: 15px; }
.t3 { margin-left: 16px; }
.t4 { margin-left: 8px; }
.bm-caret { width: 7px; height: 4px; margin: 0 0 9px 5px; flex: none; }

.page { height: 713px; flex: none; display: flex; background: #fff; }
.gutter { width: 41px; background: #f0f0f0; }
.gutter-white { width: 20px; background: #fff; }
.sheets { width: 542px; display: flex; flex-direction: column; gap: 24px; }
.sheet { display: block; background: #000; flex: none; }
.olive, .olive path { fill: none; stroke: #a09a10; }
.yel, .yel path { fill: none; stroke: #e8e040; }
.grey { fill: none; stroke: #9a9a9a; }
.lgrey { fill: none; stroke: #c8c8c8; stroke-width: 2; }
.red { fill: none; stroke: #c0141c; }
.grn, .grn path { fill: none; stroke: #14c814; }
.grn .cloud { stroke-dasharray: 6 2; }
.ns * { vector-effect: non-scaling-stroke; }
.reddots rect { fill: #d02020; }
.s { font: 11px "Liberation Sans", "Noto Sans CJK SC", sans-serif; }
.s-w { fill: #ddd; }
.s-g { fill: #20c820; }
.s-col { font-size: 20px; }
.s-title { font-size: 26px; font-weight: 300; fill: #e8e8e8; }
.m { font: 34px "Liberation Sans", "Noto Sans CJK SC", sans-serif; }
.m-w { fill: #ddd; }
.m-g { fill: #22d822; }
.m-s { font-size: 30px; }
.m-xs { font-size: 26px; }

.h-scroll { height: 16px; flex: none; background: #f0f0f0; display: flex; }
.h-thumb { width: 263px; height: 15px; background: #c0c0c0; }
.bstatus { height: 23px; flex: none; display: flex; align-items: center; background: #fff; border-top: 1px solid #cfcfcf; color: #666; padding-left: 186px; font-size: 12px; white-space: nowrap; }
.bs { display: inline-flex; align-items: center; gap: 4px; }
.play { width: 16px; height: 16px; }
.bs-ico { width: 14px; height: 14px; flex: none; fill: none; stroke: #888; stroke-width: 1; }
.i1 { margin-left: 18px; }
.i2 { margin-left: 22px; }
.i3 { margin-left: 20px; }
.bs-dl { margin-left: 13px; }
.i4 { margin-left: 19px; }
.i5, .i6, .i7 { margin-left: 21px; }
.i8 { margin-left: 20px; }
.bs-zoom { margin-left: 15px; font-family: "Liberation Sans", sans-serif; font-size: 11px; }
.wallpaper { flex: 1; background: linear-gradient(90deg, #4a5a48 0 12%, #c8d0d0 12% 19%, #27301f 19% 45%, #a8a898 45% 53%, #30382c 53% 80%, #b0b4a8 80% 90%, #3a4238 90%); }

.marks { position: absolute; left: 0; top: 0; pointer-events: none; }
.marks ellipse { fill: none; stroke: #dc0a0a; stroke-width: 3; }
.marks .top { stroke-width: 3.500; }
.marks .big { stroke-width: 4; }
```
